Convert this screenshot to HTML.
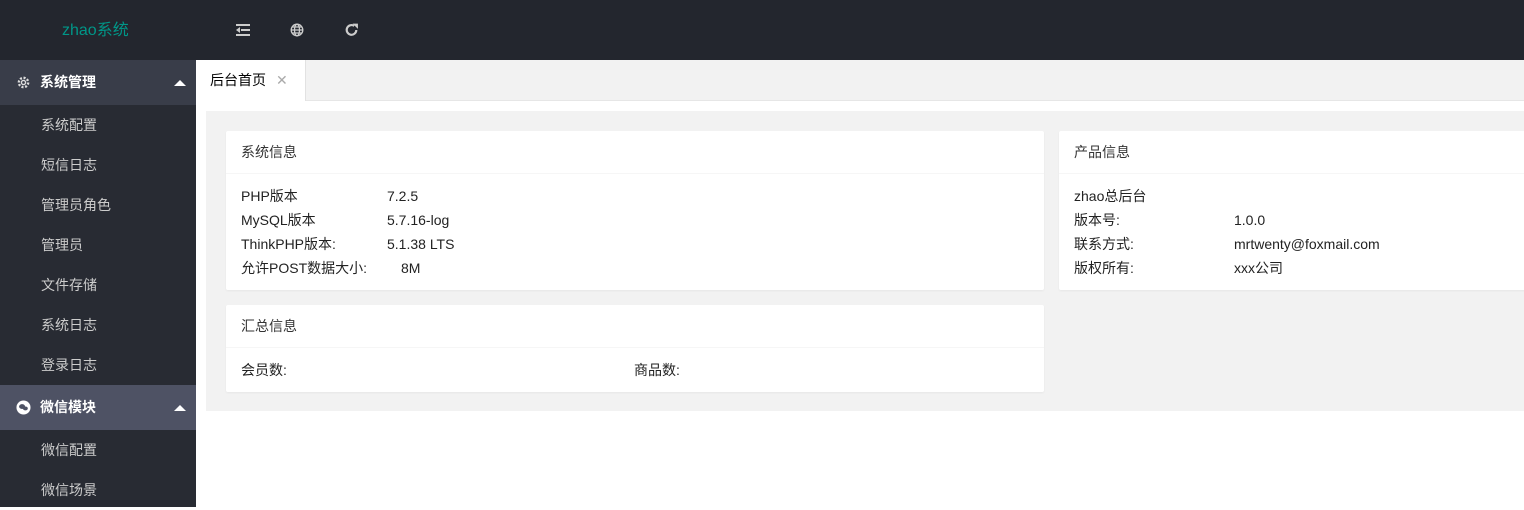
<!DOCTYPE html>
<html><head><meta charset="utf-8"><style>
*{margin:0;padding:0;box-sizing:border-box}
body{width:1524px;height:507px;overflow:hidden;font-family:"Liberation Sans","Noto Sans CJK SC",sans-serif;font-size:14px;color:#333;background:#fff;position:relative}
.hd{position:absolute;left:0;top:0;width:1524px;height:60px;background:#23262e}
.logo{position:absolute;left:62px;top:21px;color:#009688;font-size:16px;line-height:20px}
.ic{position:absolute;top:22px}
.sb{position:absolute;left:0;top:60px;width:196px;height:447px;background:#282b33}
.grp{height:45px;line-height:45px;color:#fff;font-weight:bold;padding-left:40px;position:relative;font-size:14px}
.grp .tri{position:absolute;left:174px;top:20px;width:0;height:0;border-left:6px solid transparent;border-right:6px solid transparent;border-bottom:6px solid #fff}
.it{height:40px;line-height:40px;color:#ccc;padding-left:41px}
.tabbar{position:absolute;left:196px;top:60px;width:1328px;height:41px;background:#f2f2f2;border-bottom:1px solid #e6e6e6}
.tab{position:absolute;left:0;top:0;width:110px;height:41px;background:#fff;border-right:1px solid #e2e2e2;line-height:40px;padding-left:14px;color:#000}
.tab span{color:#aaa;margin-left:10px;font-size:14px}
.bg{position:absolute;left:206px;top:111px;width:1318px;height:300px;background:#f2f2f2}
.card{position:absolute;background:#fff;border-radius:2px;box-shadow:0 1px 2px rgba(0,0,0,.05)}
.ch{height:43px;line-height:43px;padding-left:15px;border-bottom:1px solid #f6f6f6;color:#333}
.row{position:absolute;color:#222;line-height:20px;height:20px}
</style></head><body>
<div class="hd">
<div class="logo">zhao系统</div>
<svg class="ic" style="left:235px" width="16" height="16" viewBox="0 0 16 16"><g fill="#ccc"><rect x="1" y="2" width="14" height="2"/><rect x="6" y="7" width="9" height="2"/><rect x="1" y="12" width="14" height="2"/><path d="M1 8l4-3v6z"/></g></svg>
<svg class="ic" style="left:290px" width="14" height="16" viewBox="0 0 14 14"><g fill="none" stroke="#ccc" stroke-width="1.3"><circle cx="7" cy="7" r="5.8"/><ellipse cx="7" cy="7" rx="2.5" ry="5.8"/><path d="M1.2 7h11.6M2 4h10M2 10h10"/></g></svg>
<svg class="ic" style="left:344px" width="15" height="16" viewBox="0 0 14 14"><path d="M11.5 7A4.5 4.5 0 1 1 9.5 3.2" fill="none" stroke="#ccc" stroke-width="2"/><path d="M8 1h5v5z" fill="#ccc"/></svg>
</div>
<div class="sb">
<div class="grp" style="background:#393d49"><svg style="position:absolute;left:16px;top:15px" width="15" height="15" viewBox="0 0 16 16"><circle cx="8" cy="8" r="5" fill="none" stroke="#ddd" stroke-width="2.5" stroke-dasharray="2.2 1.7"/><circle cx="8" cy="8" r="2.2" fill="none" stroke="#ddd" stroke-width="1.5"/></svg>系统管理<i class="tri"></i></div>
<div class="it">系统配置</div><div class="it">短信日志</div><div class="it">管理员角色</div><div class="it">管理员</div><div class="it">文件存储</div><div class="it">系统日志</div><div class="it">登录日志</div>
<div class="grp" style="background:#4e5264"><svg style="position:absolute;left:16px;top:15px" width="15" height="15" viewBox="0 0 16 16"><circle cx="8" cy="8" r="7.5" fill="#fff"/><ellipse cx="6.5" cy="7" rx="3.2" ry="2.6" fill="#4e5264"/><ellipse cx="10" cy="9" rx="2.6" ry="2.1" fill="#4e5264"/></svg>微信模块<i class="tri"></i></div>
<div class="it">微信配置</div><div class="it">微信场景</div>
</div>
<div class="tabbar"><div class="tab">后台首页<span>✕</span></div></div>
<div class="bg"></div>
<div class="card" style="left:226px;top:131px;width:818px;height:159px"><div class="ch">系统信息</div>
<div class="row" style="left:15px;top:55px">PHP版本</div><div class="row" style="left:161px;top:55px">7.2.5</div>
<div class="row" style="left:15px;top:79px">MySQL版本</div><div class="row" style="left:161px;top:79px">5.7.16-log</div>
<div class="row" style="left:15px;top:103px">ThinkPHP版本:</div><div class="row" style="left:161px;top:103px">5.1.38 LTS</div>
<div class="row" style="left:15px;top:127px">允许POST数据大小:</div><div class="row" style="left:175px;top:127px">8M</div>
</div>
<div class="card" style="left:1059px;top:131px;width:470px;height:159px"><div class="ch">产品信息</div>
<div class="row" style="left:15px;top:55px">zhao总后台</div>
<div class="row" style="left:15px;top:79px">版本号:</div><div class="row" style="left:175px;top:79px">1.0.0</div>
<div class="row" style="left:15px;top:103px">联系方式:</div><div class="row" style="left:175px;top:103px">mrtwenty@foxmail.com</div>
<div class="row" style="left:15px;top:127px">版权所有:</div><div class="row" style="left:175px;top:127px">xxx公司</div>
</div>
<div class="card" style="left:226px;top:305px;width:818px;height:87px"><div class="ch">汇总信息</div>
<div class="row" style="left:15px;top:55px">会员数:</div><div class="row" style="left:408px;top:55px">商品数:</div>
</div>
</body></html>
